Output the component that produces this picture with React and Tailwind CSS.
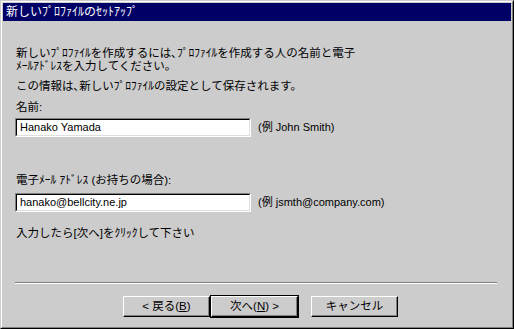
export default function App() {
  const font = { fontFamily: '"Liberation Sans", "Noto Sans CJK JP", sans-serif' };

  return (
    <div className="w-[514px] h-[329px] bg-[#cccccc]" style={font}>
      {/* outer frame */}
      <div className="w-full h-full border border-t-[#cccccc] border-l-[#cccccc] border-r-black border-b-black">
        <div className="w-full h-full border border-t-white border-l-white border-r-[#808080] border-b-[#808080] p-px flex flex-col">
          {/* Title bar */}
          <div className="h-[18px] bg-[#000066] text-white text-[12px] leading-[18px] pl-[3px] shrink-0">
            新しいﾌﾟﾛﾌｧｲﾙのｾｯﾄｱｯﾌﾟ
          </div>

          {/* Body */}
          <div className="flex-1 flex flex-col pl-[12px] pr-[13px] text-[11.5px] leading-[13px] text-black">
            <p className="mt-[26px] pl-px">
              新しいﾌﾟﾛﾌｧｲﾙを作成するには､ﾌﾟﾛﾌｧｲﾙを作成する人の名前と電子
              <br />
              ﾒｰﾙｱﾄﾞﾚｽを入力してください。
            </p>
            <p className="mt-[7px] pl-px">この情報は､新しいﾌﾟﾛﾌｧｲﾙの設定として保存されます。</p>

            <p className="mt-[8px] pl-px">名前:</p>
            <div className="mt-[4px] flex items-center">
              <div className="w-[236px] h-[19px] border border-t-[#808080] border-l-[#808080] border-r-white border-b-white">
                <div className="h-full border border-t-black border-l-black border-r-[#dfdfdf] border-b-[#dfdfdf] bg-white pl-[3px] text-[11px] leading-[15px]">
                  Hanako Yamada
                </div>
              </div>
              <span className="ml-[7px] text-[11px]">(例 John Smith)</span>
            </div>

            <p className="mt-[37px] pl-px">電子ﾒｰﾙ ｱﾄﾞﾚｽ (お持ちの場合):</p>
            <div className="mt-[6px] flex items-center">
              <div className="w-[236px] h-[19px] border border-t-[#808080] border-l-[#808080] border-r-white border-b-white">
                <div className="h-full border border-t-black border-l-black border-r-[#dfdfdf] border-b-[#dfdfdf] bg-white pl-[3px] text-[11px] leading-[15px]">
                  hanako@bellcity.ne.jp
                </div>
              </div>
              <span className="ml-[7px] text-[11px]">(例 jsmth@company.com)</span>
            </div>

            <p className="mt-[15px] pl-px">入力したら[次へ]をｸﾘｯｸして下さい</p>

            {/* separator */}
            <div className="mt-[42px] mr-[1px] border-t border-t-[#808080] border-b border-b-white" />

            {/* buttons */}
            <div className="mt-[11px] flex items-center pl-[108px]">
              <button className="w-[87px] h-[21px] border border-t-white border-l-white border-r-black border-b-black shadow-[inset_-1px_-1px_0_#808080] text-[11.5px] leading-none">
                &lt; 戻る(<span className="underline">B</span>)
              </button>
              <div className="border border-black">
                <button className="w-[87px] h-[21px] border border-t-white border-l-white border-r-black border-b-black shadow-[inset_-1px_-1px_0_#808080] text-[11.5px] leading-none">
                  次へ(<span className="underline">N</span>) &gt;
                </button>
              </div>
              <button className="ml-[12px] w-[87px] h-[21px] border border-t-white border-l-white border-r-black border-b-black shadow-[inset_-1px_-1px_0_#808080] text-[11.5px] leading-none">
                キャンセル
              </button>
            </div>
          </div>
        </div>
      </div>
    </div>
  );
}
